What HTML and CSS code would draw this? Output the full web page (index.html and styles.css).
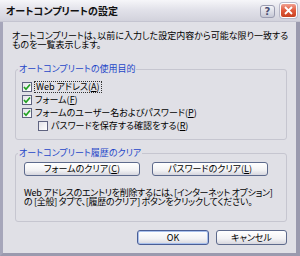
FILE: index.html
```html
<!DOCTYPE html>
<html lang="ja">
<head>
  <meta charset="UTF-8">
  <title>オートコンプリートの設定</title>
  <link rel="stylesheet" href="styles.css">
</head>
<body>
  <div class="window">
    <div class="titlebar">
      <span class="title">オートコンプリートの設定</span>
      <div class="title-buttons">
        <div class="tb-btn help">?</div>
        <div class="tb-btn close">
          <svg width="9" height="9" viewBox="0 0 9 9"><path d="M1 1 L8 8 M8 1 L1 8" stroke="#fff" stroke-width="1.8" fill="none"/></svg>
        </div>
      </div>
    </div>

    <div class="content">
      <div class="desc">
        <div class="line">オートコンプリートは、以前に入力した設定内容から可能な限り一致する</div>
        <div class="line">ものを一覧表示します。</div>
      </div>

      <!-- 使用目的 -->
      <div class="group first">
        <div class="group-title">オートコンプリートの使用目的</div>
        <div class="checks">
          <div class="check-row">
            <span class="box"><svg width="8" height="8" viewBox="0 0 8 8"><path d="M1 4 L3 6.3 L7 1.5" stroke="#21a121" stroke-width="1.7" fill="none"/></svg></span>
            <span class="focus">Web アドレス(<u>A</u>)</span>
          </div>
          <div class="check-row">
            <span class="box"><svg width="8" height="8" viewBox="0 0 8 8"><path d="M1 4 L3 6.3 L7 1.5" stroke="#21a121" stroke-width="1.7" fill="none"/></svg></span>
            <span>フォーム(<u>F</u>)</span>
          </div>
          <div class="check-row">
            <span class="box"><svg width="8" height="8" viewBox="0 0 8 8"><path d="M1 4 L3 6.3 L7 1.5" stroke="#21a121" stroke-width="1.7" fill="none"/></svg></span>
            <span>フォームのユーザー名およびパスワード(<u>P</u>)</span>
          </div>
          <div class="check-row sub">
            <span class="box"></span>
            <span>パスワードを保存する確認をする(<u>R</u>)</span>
          </div>
        </div>
      </div>

      <!-- 履歴のクリア -->
      <div class="group second">
        <div class="group-title">オートコンプリート履歴のクリア</div>
        <div class="clear-buttons">
          <button class="btn wide">フォームのクリア(<u>C</u>)</button>
          <button class="btn wide">パスワードのクリア(<u>L</u>)</button>
        </div>
        <div class="note">
          <div class="line">Web アドレスのエントリを削除するには、[インターネット オプション]</div>
          <div class="line">の [全般] タブで、[履歴のクリア] ボタンをクリックしてください。</div>
        </div>
      </div>

      <div class="dialog-buttons">
        <button class="btn ok">OK</button>
        <button class="btn cancel">キャンセル</button>
      </div>
    </div>
  </div>
</body>
</html>
```

FILE: styles.css
```css
body {
  margin: 0;
  padding: 0;
  font-family: "Noto Sans CJK JP", sans-serif;
  font-feature-settings: "palt";
  font-size: 9px;
  line-height: 9px;
  background-color: #e0e0e6;
}

.window {
  width: 300px;
  height: 256px;
  box-sizing: border-box;
  display: flex;
  flex-direction: column;
  background-color: #e0e0e6;
  border-left: 3px solid #a6a6ba;
  border-right: 4px solid #9a9aae;
  border-bottom: 3px solid #9a9aae;
}

.titlebar {
  height: 22px;
  flex-shrink: 0;
  box-sizing: border-box;
  margin-left: -3px;
  margin-right: -4px;
  padding: 0 3px 0 6px;
  display: flex;
  align-items: center;
  justify-content: space-between;
  background: linear-gradient(#f6f6f9, #e2e2ea 45%, #d2d2dc);
  border-bottom: 1px solid #c4c4d0;
}

.title {
  font-size: 10px;
  line-height: 12px;
  font-weight: bold;
  color: #111;
}

.title-buttons {
  display: flex;
  align-items: center;
  gap: 5px;
}

.tb-btn {
  box-sizing: border-box;
  border-radius: 3px;
  display: flex;
  align-items: center;
  justify-content: center;
}

.help {
  width: 15px;
  height: 13px;
  margin-top: 2px;
  background: linear-gradient(#f4f4f8, #c6c8d6);
  border: 1px solid #9a9cb0;
  color: #4a4e72;
  font-family: "DejaVu Sans", sans-serif;
  font-size: 10px;
  font-weight: bold;
}

.close {
  width: 17px;
  height: 15px;
  background: linear-gradient(#f0a090, #e05a3c 50%, #c8401f);
  border: 1px solid #ffffff;
  box-shadow: 0 0 0 1px #b8b8c8;
}

.content {
  flex: 1;
  padding: 9px 9px 0 9px;
  display: flex;
  flex-direction: column;
}

.line {
  height: 9px;
  white-space: nowrap;
}

.desc {
  color: #000;
}

/* group box: the title sits on the top border */
.group {
  position: relative;
  margin: 20px 0 0 3px;
  padding: 10px 0 7px 0;
  border: 1px solid #c6c6d0;
  border-radius: 3px;
}

.group-title {
  position: absolute;
  top: -6px;
  left: 2px;
  padding: 0 1px;
  line-height: 10px;
  background-color: #e0e0e6;
  color: #1f46c8;
}

.checks {
  padding-left: 6px;
}

.check-row {
  height: 13px;
  display: flex;
  align-items: center;
  gap: 3px;
  color: #000;
}

.check-row.sub {
  padding-left: 16px;
}

.box {
  width: 10px;
  height: 10px;
  box-sizing: border-box;
  border: 1px solid #5f6380;
  background: linear-gradient(135deg, #e2e2e8, #ffffff);
  display: flex;
  align-items: center;
  justify-content: center;
}

.focus {
  outline: 1px dotted #333;
  padding: 0 1px;
  line-height: 10px;
}

.group.second {
  margin-top: 13px;
  padding: 8px 0 15px 0;
}

.clear-buttons {
  display: flex;
  gap: 12px;
  padding-left: 8px;
}

.btn {
  box-sizing: border-box;
  height: 14px;
  padding: 0;
  border: 1px solid #5d6a8c;
  border-radius: 3px;
  background: linear-gradient(#ffffff, #f2f2f4 60%, #d6d6de);
  font-family: "Noto Sans CJK JP", sans-serif;
  font-feature-settings: "palt";
  font-size: 9px;
  line-height: 12px;
  color: #000;
}

.btn.wide {
  width: 116px;
}

.note {
  margin: 12px 0 0 8px;
  letter-spacing: -0.3px;
  color: #000;
}

.dialog-buttons {
  margin-top: 8px;
  display: flex;
  justify-content: flex-end;
  gap: 7px;
}

.btn.ok {
  width: 72px;
  height: 15px;
  border-color: #4a5e96;
  box-shadow: inset 0 0 0 1px #a8c0ec;
}

.btn.cancel {
  width: 71px;
  height: 15px;
}
```
